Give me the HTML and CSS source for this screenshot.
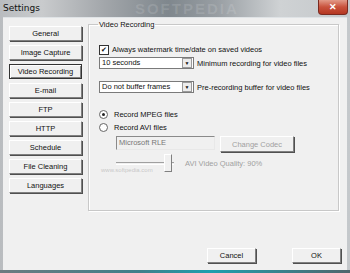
FILE: index.html
```html
<!DOCTYPE html>
<html lang="en">
<head>
    <meta charset="UTF-8">
    <title>Settings</title>
    <link rel="stylesheet" href="styles.css">
</head>
<body>
    <div class="window">
        <div class="title-bar">
            <span class="title">Settings</span>
            <span class="title-mark">SOFTPEDIA</span>
            <button class="close-button">&#x2715;</button>
        </div>
        <div class="client">
            <div class="main-row">
                <div class="nav">
                    <button class="nav-button">General</button>
                    <button class="nav-button">Image Capture</button>
                    <button class="nav-button active">Video Recording</button>
                    <button class="nav-button">E-mail</button>
                    <button class="nav-button">FTP</button>
                    <button class="nav-button">HTTP</button>
                    <button class="nav-button">Schedule</button>
                    <button class="nav-button">File Cleaning</button>
                    <button class="nav-button">Languages</button>
                </div>
                <fieldset class="group">
                    <legend>Video Recording</legend>
                    <label class="check-row">
                        <span class="checkbox">&#x2714;</span>
                        Always watermark time/date on saved videos
                    </label>
                    <div class="select-row first">
                        <div class="select"><span>10 seconds</span><span class="drop">&#x25BC;</span></div>
                        <span>Minimum recording for video files</span>
                    </div>
                    <div class="select-row">
                        <div class="select"><span>Do not buffer frames</span><span class="drop">&#x25BC;</span></div>
                        <span>Pre-recording buffer for video files</span>
                    </div>
                    <label class="radio-row first">
                        <span class="radio checked"></span>
                        Record MPEG files
                    </label>
                    <label class="radio-row">
                        <span class="radio"></span>
                        Record AVI files
                    </label>
                    <div class="codec-row">
                        <div class="textbox">Microsoft RLE</div>
                        <button class="codec-button">Change Codec</button>
                    </div>
                    <div class="slider-row">
                        <div class="slider">
                            <div class="track"></div>
                            <div class="thumb"></div>
                        </div>
                        <span class="quality">AVI Video Quality: 90%</span>
                    </div>
                    <span class="watermark-url">www.softpedia.com</span>
                </fieldset>
            </div>
            <div class="footer">
                <button class="dialog-button cancel">Cancel</button>
                <button class="dialog-button">OK</button>
            </div>
        </div>
    </div>
</body>
</html>
```

FILE: styles.css
```css
body {
    margin: 0;
    width: 350px;
    height: 273px;
    overflow: hidden;
    background: linear-gradient(to right, #6d7b80, #3f7f8a 40%, #1f9fae 60%, #50656c);
    font-family: 'Liberation Sans', Arial, sans-serif;
    font-size: 7.5px;
    color: #111;
}
.window {
    width: 350px;
    height: 270px;
    background: linear-gradient(to right, #b9bcbf, #c9cbcd 12%, #a2a6aa 30%, #7f878d 48%, #989ea3 62%, #cfd2d4 80%, #c4c8cb);
    display: flex;
    flex-direction: column;
}
.title-bar {
    height: 17px;
    position: relative;
    display: flex;
    align-items: center;
}
.title {
    margin-left: 3px;
    font-family: 'DejaVu Sans', sans-serif;
    font-size: 9px;
    color: #111;
    margin-top: -1px;
}
.title-mark {
    margin-left: 95px;
    font-size: 15px;
    font-weight: bold;
    letter-spacing: 2px;
    color: rgba(255, 255, 255, 0.12);
}
.close-button {
    position: absolute;
    right: 2px;
    top: 0;
    width: 30px;
    height: 15px;
    border: 1px solid #7a2a20;
    border-top: none;
    border-radius: 0 0 4px 4px;
    background: linear-gradient(#e29a88, #c9523c 50%, #b43722);
    color: #fff;
    font-size: 9px;
    font-weight: bold;
    padding: 0;
    line-height: 13px;
}
.client {
    flex: 1;
    margin: 0 3px;
    background: #f0f0f0;
    border-top: 1px solid #dfe3e6;
    display: flex;
    flex-direction: column;
}
.main-row {
    display: flex;
    padding-top: 2px;
}
.nav {
    width: 73px;
    margin: 6px 0 0 6px;
    display: flex;
    flex-direction: column;
    gap: 4px;
}
.nav-button {
    height: 15px;
    padding: 0;
    font-family: inherit;
    font-size: 7.5px;
    color: #111;
    background: #f0f0f0;
    border: 1px solid;
    border-color: #ffffff #808080 #808080 #ffffff;
    box-shadow: 1px 1px 0 #505050;
}
.nav-button.active {
    border: 1px solid #333;
    box-shadow: inset 1px 1px 0 #fff, inset -1px -1px 0 #808080;
}
.group {
    position: relative;
    width: 251px;
    height: 191px;
    box-sizing: border-box;
    margin: 0 0 0 6px;
    padding: 0 0 0 10px;
    border: 1px solid #c8c8c8;
    box-shadow: 1px 1px 0 #fff, inset 1px 1px 0 #fff;
    min-width: 0;
}
.group legend {
    padding: 0 1px;
    margin-left: -1px;
    font-size: 7.5px;
}
.check-row, .radio-row {
    display: flex;
    align-items: center;
    gap: 3px;
    height: 11px;
}
.check-row {
    margin-top: 15px;
}
.checkbox {
    width: 8px;
    height: 8px;
    border: 1px solid #333;
    background: #fff;
    font-size: 7px;
    line-height: 8px;
    text-align: center;
    color: #111;
    box-sizing: content-box;
}
.select-row {
    display: flex;
    align-items: center;
    gap: 3px;
    margin-top: 12px;
}
.select-row.first {
    margin-top: 2px;
}
.select {
    width: 91px;
    height: 10px;
    border: 1px solid #7a7a7a;
    background: #fff;
    display: flex;
    align-items: center;
    justify-content: space-between;
    padding-left: 2px;
    line-height: 10px;
}
.drop {
    width: 8px;
    height: 8px;
    margin-right: 1px;
    border: 1px solid #9a9a9a;
    background: #ececec;
    font-size: 5px;
    line-height: 8px;
    text-align: center;
}
.radio-row {
    margin-top: 2px;
}
.radio-row.first {
    margin-top: 16px;
}
.radio {
    width: 7px;
    height: 7px;
    border-radius: 50%;
    border: 1px solid #666;
    background: #fff;
    margin-right: 3px;
    position: relative;
}
.radio.checked::after {
    content: '';
    position: absolute;
    left: 2px;
    top: 2px;
    width: 3px;
    height: 3px;
    border-radius: 50%;
    background: #222;
}
.codec-row {
    display: flex;
    align-items: flex-start;
    gap: 5px;
    margin: 3px 0 0 17px;
}
.textbox {
    width: 95px;
    height: 12px;
    border: 1px solid;
    border-color: #8a8a8a #e8e8e8 #e8e8e8 #8a8a8a;
    background: #f0f0f0;
    color: #777;
    padding-left: 2px;
    line-height: 12px;
}
.codec-button {
    width: 74px;
    height: 16px;
    padding: 0;
    font-family: inherit;
    font-size: 7.5px;
    color: #a0a0a0;
    background: #f0f0f0;
    border: 1px solid;
    border-color: #ffffff #808080 #808080 #ffffff;
    box-shadow: 1px 1px 0 #505050;
}
.slider-row {
    display: flex;
    align-items: center;
    margin: 2px 0 0 17px;
    height: 18px;
}
.slider {
    position: relative;
    width: 58px;
    height: 18px;
}
.track {
    position: absolute;
    left: 0;
    top: 8px;
    width: 58px;
    height: 1px;
    border-top: 1px solid #a0a0a0;
    border-bottom: 1px solid #fff;
}
.thumb {
    position: absolute;
    left: 48px;
    top: 0;
    width: 6px;
    height: 16px;
    border: 1px solid;
    border-color: #fff #808080 #808080 #fff;
    background: #f0f0f0;
}
.quality {
    margin-left: 11px;
    color: #a0a0a0;
}
.watermark-url {
    position: absolute;
    left: 12px;
    top: 138px;
    font-size: 6px;
    color: rgba(170, 170, 170, 0.6);
}
.footer {
    display: flex;
    justify-content: flex-end;
    gap: 36px;
    margin: 37px 6px 0 0;
}
.dialog-button {
    width: 49px;
    height: 15px;
    padding: 0;
    font-family: inherit;
    font-size: 7.5px;
    color: #111;
    background: #f0f0f0;
    border: 1px solid;
    border-color: #ffffff #808080 #808080 #ffffff;
    box-shadow: 1px 1px 0 #505050;
}
```
